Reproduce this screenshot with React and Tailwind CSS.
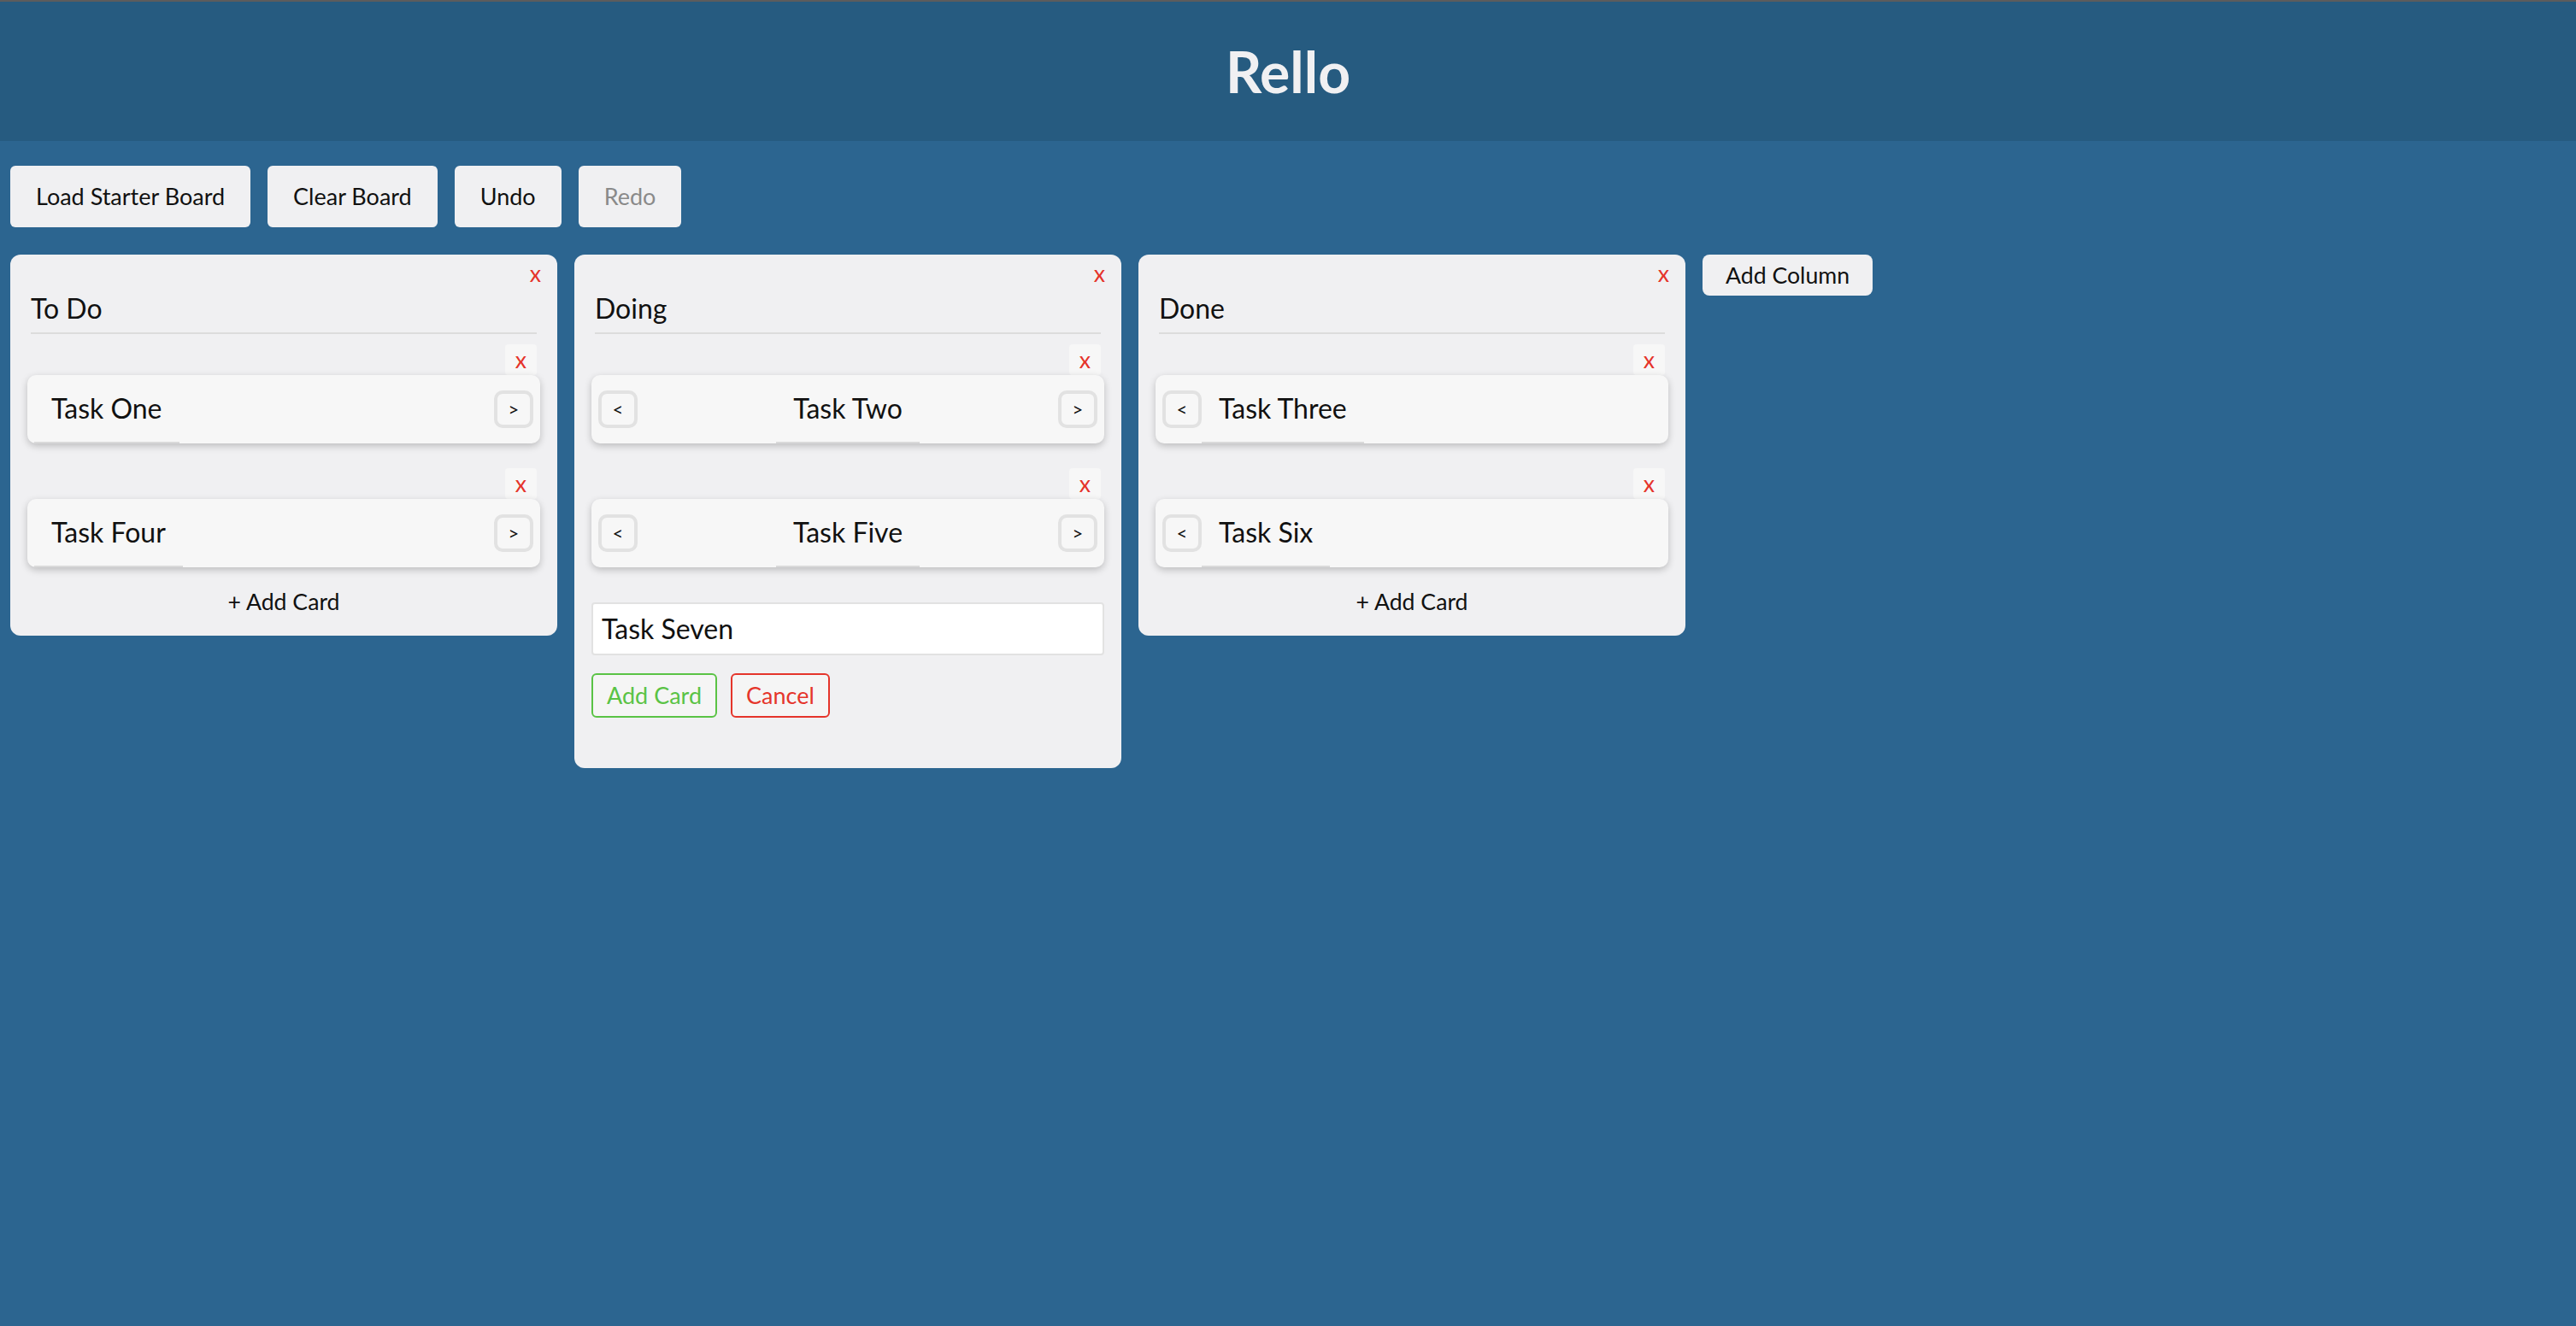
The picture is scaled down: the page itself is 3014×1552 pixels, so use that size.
import React from "react"

const columns = [
  { title: "To Do", cards: ["Task One", "Task Four"], left: false, right: true },
  { title: "Doing", cards: ["Task Two", "Task Five"], left: true, right: true, draft: "Task Seven" },
  { title: "Done", cards: ["Task Three", "Task Six"], left: true, right: false },
]

function CloseButton({ className = "" }) {
  return (
    <button
      className={
        "flex h-[36px] w-[37px] items-center justify-center rounded-[4px] text-[26.67px] leading-[32px] text-[#e5332a] " +
        className
      }
    >
      x
    </button>
  )
}

function ArrowButton({ children, className = "" }) {
  return (
    <button
      className={
        "flex h-[44px] w-[46px] shrink-0 items-center justify-center self-center rounded-[10px] border-4 border-[#e2e2e2] bg-[#f7f7f7] text-[22px] leading-none text-[#111] " +
        className
      }
    >
      {children}
    </button>
  )
}

function Card({ text, left, right }) {
  // con dos flechas el texto queda centrado, si no va pegado a la izquierda
  const both = left && right
  return (
    <div className="flex flex-col">
      <div className="flex justify-end pr-[4px]">
        <CloseButton className="bg-[#f7f7f7]" />
      </div>
      <div className="flex h-[80px] items-stretch rounded-[10px] bg-[#f7f7f7] px-[8px] shadow-[0_3px_8px_rgba(0,0,0,0.22)]">
        {left && <ArrowButton>{"<"}</ArrowButton>}
        <div
          className={
            "flex items-center border-b-2 border-[#dadada] px-[20px] text-[32px] leading-[38px] text-[#111] " +
            (both ? "mx-auto" : "")
          }
        >
          {text}
        </div>
        {right && <ArrowButton className={both ? "" : "ml-auto"}>{">"}</ArrowButton>}
      </div>
    </div>
  )
}

function Column({ column }) {
  return (
    <div className="flex w-[640px] shrink-0 flex-col rounded-[12px] bg-[#f0f0f2] px-[20px] pt-[4px] pb-[24px]">
      <div className="-mr-[13px] flex justify-end">
        <CloseButton />
      </div>
      <div className="mx-[4px] mt-[4px] border-b-2 border-[#dcdcdc] pb-[9px] text-[32px] leading-[38px] text-[#111]">
        {column.title}
      </div>

      {/* Tarjetas */}
      <div className="mt-[12px] flex flex-col gap-[29px]">
        {column.cards.map((card) => (
          <Card key={card} text={card} left={column.left} right={column.right} />
        ))}
      </div>

      {column.draft ? (
        <div className="mt-[41px] mb-[35px] flex flex-col">
          <input
            defaultValue={column.draft}
            className="w-full rounded-[4px] border-2 border-[#e2e2e2] bg-white px-[10px] py-[10px] text-[32px] leading-[38px] text-[#111] outline-none"
          />
          <div className="mt-[21px] flex gap-[16px]">
            <button className="rounded-[6px] border-2 border-[#5ac345] bg-[#f5f5f5] px-[16px] py-[8px] text-[27px] leading-[32px] text-[#5ac345]">
              Add Card
            </button>
            <button className="rounded-[6px] border-2 border-[#e5352b] bg-[#f5f5f5] px-[16px] py-[8px] text-[27px] leading-[32px] text-[#e5352b]">
              Cancel
            </button>
          </div>
        </div>
      ) : (
        <button className="mt-[24px] text-center text-[26.67px] leading-[32px] text-[#111]">+ Add Card</button>
      )}
    </div>
  )
}

export default function App() {
  return (
    <div className="min-h-screen bg-[#2c6590] font-[Lato,sans-serif]">
      <header className="flex h-[165px] items-center justify-center border-t-2 border-[#5c5c5c] bg-[#265b80]">
        <h1 className="text-[66px] font-bold leading-[80px] text-[#f0f0f2]">Rello</h1>
      </header>

      {/* Barra de acciones */}
      <div className="mt-[29px] flex gap-[20px] px-[12px]">
        {["Load Starter Board", "Clear Board", "Undo", "Redo"].map((label) => (
          <button
            key={label}
            className={
              "rounded-[6px] bg-[#f0f0f2] px-[30px] py-[20px] text-[27px] leading-[32px] " +
              (label === "Redo" ? "text-[#8a8a8a]" : "text-[#111]")
            }
          >
            {label}
          </button>
        ))}
      </div>

      {/* Tablero */}
      <div className="mt-[32px] flex items-start gap-[20px] px-[12px]">
        {columns.map((column) => (
          <Column key={column.title} column={column} />
        ))}
        <button className="rounded-[8px] bg-[#f0f0f2] px-[27px] py-[8px] text-[26.67px] leading-[32px] text-[#111]">
          Add Column
        </button>
      </div>
    </div>
  )
}
